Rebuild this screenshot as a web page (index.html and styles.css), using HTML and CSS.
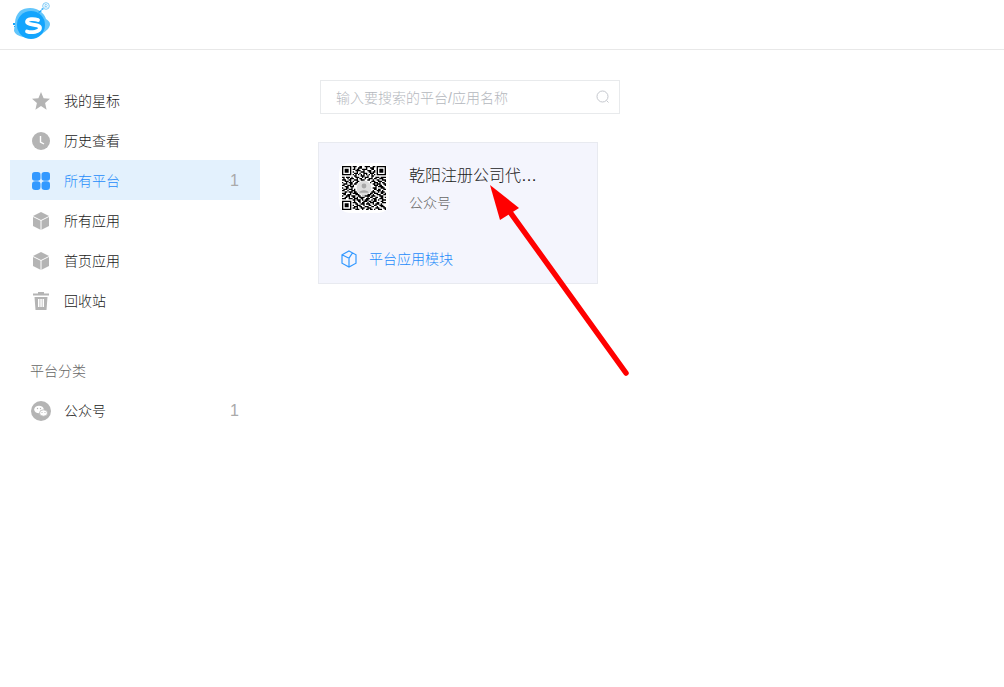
FILE: index.html
```html
<!DOCTYPE html>
<html lang="zh-CN">
<head>
<meta charset="utf-8">
<title>平台</title>
<link rel="stylesheet" href="styles.css">
</head>
<body>
<header class="topbar">
  <svg class="logo" viewBox="0 0 40 40" width="40" height="40">
    <path fill="#63c6fb" d="M8 10c4-3 11-4 16-2 5 2 9 6 10 10 2 1 4 3 4 5 0 4-4 7-8 10-5 4-13 5-19 3-5-1-8-3-9-6 0-3 1-5 1-8 0-5 2-9 5-12z"/>
    <circle cx="19" cy="24" r="14" fill="#14a5fd"/>
    <path fill="none" stroke="#fff" stroke-width="3.800" stroke-linecap="round" d="M26 19c-4-1.500-11-1.500-11 2 0 3.500 13 1.500 13 6 0 4-9 5-13 3.500"/>
    <path fill="#14a5fd" d="M1 22h2v2H1zM2 25h1v1H2zM26 11l3-2 1 1-3 2zM29 8l2-1 1 1-2 1z"/>
    <circle cx="34" cy="5" r="3.300" fill="#fff" stroke="#7fcbf7" stroke-width="1"/>
    <path fill="none" stroke="#7fcbf7" stroke-width=".8" d="M33 7V3.500h1.300a1 1 0 0 1 0 2H33M34.300 5.500l1 1.500"/>
  </svg>
</header>

<div class="layout">
  <nav class="sidebar">
    <a class="nav-item">
      <svg class="icon" viewBox="0 0 18 18"><path class="fill-gray" d="M9 0l2.600 6.200 6.400.5-4.900 4.300 1.500 6.700L9 14.100l-5.600 3.600L4.900 11 0 6.700l6.400-.5z"/></svg>
      <span class="label">我的星标</span>
    </a>
    <a class="nav-item">
      <svg class="icon" viewBox="0 0 18 18"><circle class="fill-gray" cx="9" cy="9" r="9"/><path fill="none" stroke="#fff" stroke-width="1.400" d="M8.500 4v6l3.500 2"/></svg>
      <span class="label">历史查看</span>
    </a>
    <a class="nav-item active">
      <svg class="icon" viewBox="0 0 18 18"><g fill="#3399ff"><rect width="8.500" height="8.800" rx="2.800"/><rect x="9.500" width="8.500" height="8.800" rx="2.800"/><rect y="9.200" width="8.500" height="8.800" rx="3.200"/><rect x="9.500" y="9.200" width="8.500" height="8.800" rx="3.200"/></g></svg>
      <span class="label">所有平台</span>
      <span class="count">1</span>
    </a>
    <a class="nav-item">
      <svg class="icon" viewBox="0 0 18 18"><path class="fill-gray" d="M9 0l8 4v10l-8 4-8-4V4z"/><path fill="none" stroke="#fff" d="M1 4.500l8 4 8-4M9 8.500V18"/></svg>
      <span class="label">所有应用</span>
    </a>
    <a class="nav-item">
      <svg class="icon" viewBox="0 0 18 18"><path class="fill-gray" d="M9 0l8 4v10l-8 4-8-4V4z"/><path fill="none" stroke="#fff" d="M1 4.500l8 4 8-4M9 8.500V18"/></svg>
      <span class="label">首页应用</span>
    </a>
    <a class="nav-item">
      <svg class="icon" viewBox="0 0 18 18"><path class="fill-gray" d="M6 0h6v1.500h5V3.500H1V1.500h5zM2.500 5h13l-1 13h-11zM6 7v8h1.500V7zM8.300 7v8h1.500V7zM10.500 7v8H12V7z" fill-rule="evenodd"/></svg>
      <span class="label">回收站</span>
    </a>

    <h2 class="nav-heading">平台分类</h2>

    <a class="nav-item">
      <svg class="icon icon-round" viewBox="0 0 20 20"><circle class="fill-gray" cx="10" cy="10" r="10"/><ellipse cx="8" cy="8.500" rx="4.800" ry="3.800" fill="#fff"/><ellipse cx="12.500" cy="12" rx="4" ry="3.200" fill="#fff" stroke="#b4b4b4" stroke-width=".8"/><circle cx="6.500" cy="7.500" r=".7" class="fill-gray"/><circle cx="9.500" cy="7.500" r=".7" class="fill-gray"/><circle cx="11" cy="11.500" r=".6" class="fill-gray"/><circle cx="14" cy="11.500" r=".6" class="fill-gray"/></svg>
      <span class="label">公众号</span>
      <span class="count">1</span>
    </a>
  </nav>

  <main class="content">
    <div class="search">
      <span class="search-placeholder">输入要搜索的平台/应用名称</span>
      <svg class="search-icon" viewBox="0 0 14 14"><circle cx="6.500" cy="6.500" r="5.500" fill="none" stroke="#c5c8ce" stroke-width="1"/><path d="M10.500 10.500l2 2" stroke="#c5c8ce" stroke-width="1"/></svg>
    </div>

    <section class="card">
      <div class="card-head">
        <div class="avatar">
          <svg class="qr" viewBox="0 0 33 33">
            <path fill="#000" fill-rule="evenodd" d="M0 0h7v7H0zM1 1v5h5V1zM2 2h3v3H2zM26 0h7v7h-7zM27 1v5h5V1zM28 2h3v3h-3zM0 26h7v7H0zM1 27v5h5v-5zM2 28h3v3H2z"/>
            <path fill="none" stroke="#000" stroke-width="1" d="M8 .5h3M13 .5h2M17 .5h4M23 .5h2M9 1.500h1M12 1.500h3M18 1.500h1M21 1.500h3M8 2.500h2M11 2.500h2M15 2.500h4M22 2.500h2M10 3.500h4M16 3.500h1M19 3.500h3M24 3.500h1M8 4.500h1M11 4.500h1M14 4.500h3M20 4.500h2M23 4.500h2M9 5.500h3M13 5.500h1M16 5.500h3M21 5.500h3M8 6.500h1M10 6.500h1M12 6.500h1M14 6.500h1M16 6.500h1M18 6.500h1M20 6.500h1M22 6.500h1M24 6.500h1M9 7.500h2M14 7.500h3M19 7.500h1M22 7.500h2M0 8.500h2M3 8.500h3M7 8.500h1M10 8.500h3M15 8.500h1M17 8.500h3M22 8.500h1M25 8.500h3M29 8.500h4M1 9.500h1M4 9.500h1M6 9.500h3M11 9.500h1M13 9.500h2M17 9.500h1M20 9.500h3M24 9.500h2M28 9.500h3M0 10.500h3M5 10.500h2M9 10.500h3M14 10.500h3M19 10.500h2M23 10.500h1M26 10.500h2M30 10.500h3M2 11.500h3M6 11.500h1M8 11.500h1M11 11.500h2M22 11.500h3M27 11.500h3M32 11.500h1M0 12.500h1M3 12.500h1M5 12.500h3M10 12.500h2M21 12.500h1M24 12.500h3M28 12.500h1M30 12.500h2M1 13.500h3M6 13.500h2M9 13.500h2M23 13.500h2M26 13.500h3M31 13.500h2M0 14.500h2M4 14.500h3M8 14.500h1M24 14.500h3M28 14.500h2M32 14.500h1M2 15.500h3M6 15.500h3M25 15.500h1M27 15.500h4M0 16.500h1M3 16.500h2M7 16.500h1M23 16.500h3M29 16.500h3M1 17.500h3M5 17.500h3M9 17.500h1M24 17.500h2M27 17.500h2M31 17.500h2M0 18.500h2M4 18.500h1M7 18.500h3M23 18.500h1M26 18.500h3M30 18.500h1M2 19.500h2M5 19.500h3M9 19.500h2M22 19.500h3M27 19.500h1M29 19.500h3M0 20.500h3M6 20.500h1M8 20.500h4M21 20.500h2M24 20.500h3M29 20.500h2M32 20.500h1M1 21.500h2M4 21.500h3M10 21.500h3M15 21.500h2M19 21.500h3M23 21.500h1M26 21.500h3M31 21.500h2M0 22.500h1M3 22.500h3M7 22.500h3M12 22.500h2M17 22.500h4M22 22.500h3M28 22.500h3M2 23.500h2M5 23.500h1M8 23.500h2M11 23.500h1M13 23.500h4M19 23.500h1M21 23.500h2M25 23.500h2M29 23.500h2M32 23.500h1M0 24.500h3M5 24.500h3M9 24.500h3M14 24.500h2M18 24.500h3M23 24.500h3M28 24.500h3M8 25.500h2M11 25.500h3M15 25.500h1M17 25.500h3M22 25.500h1M24 25.500h2M27 25.500h1M30 25.500h3M9 26.500h1M12 26.500h2M16 26.500h3M20 26.500h2M23 26.500h3M29 26.500h2M8 27.500h3M13 27.500h1M15 27.500h2M19 27.500h1M21 27.500h3M26 27.500h2M30 27.500h3M10 28.500h2M14 28.500h3M18 28.500h3M23 28.500h1M25 28.500h3M29 28.500h1M8 29.500h1M11 29.500h3M16 29.500h1M20 29.500h2M24 29.500h2M28 29.500h3M9 30.500h3M13 30.500h2M17 30.500h3M22 30.500h2M26 30.500h1M29 30.500h3M8 31.500h2M11 31.500h1M14 31.500h3M19 31.500h3M25 31.500h3M31 31.500h2M10 32.500h3M15 32.500h1M18 32.500h2M21 32.500h2M24 32.500h1M27 32.500h3M32 32.500h1"/>
            <circle cx="16.500" cy="16.500" r="5.500" fill="#dcdcdc"/>
            <circle cx="16.500" cy="15" r="1.800" fill="#a8a8a8"/>
            <path d="M13 20c0-2.500 7-2.500 7 0z" fill="#a8a8a8"/>
          </svg>
        </div>
        <div class="card-info">
          <div class="card-title">乾阳注册公司代…</div>
          <div class="card-sub">公众号</div>
        </div>
      </div>
      <a class="card-link">
        <svg class="link-icon" viewBox="0 0 16 18"><path fill="none" stroke="#3399ff" stroke-width="1.200" d="M8 1l7 3.800v8.400L8 17l-7-3.800V4.800zM1 4.800l7 3.400 3.500-5.300M8 8.200V17"/></svg>
        <span>平台应用模块</span>
      </a>
    </section>
  </main>
</div>

<svg class="annotation" viewBox="0 0 1004 687" width="1004" height="687">
  <path d="M626 373L510 212" fill="none" stroke="#ff0000" stroke-width="5.500" stroke-linecap="round"/>
  <path d="M490 185l29 23-19 12z" fill="#ff0000"/>
</svg>
</body>
</html>
```

FILE: styles.css
```css
* {
  box-sizing: border-box;
}

html,
body {
  margin: 0;
  padding: 0;
}

body {
  position: relative;
  height: 687px;
  overflow: hidden;
  background: #fff;
  color: #1a1a1a;
  font: 300 14px/20px "Liberation Sans", "Noto Sans CJK SC", sans-serif;
}

.topbar {
  display: flex;
  align-items: flex-start;
  height: 50px;
  padding: 1px 0 0 12px;
  border-bottom: 1px solid #e8e8e8;
}

.logo {
  display: block;
}

.layout {
  display: flex;
  padding: 30px 0 0 10px;
}

.sidebar {
  display: flex;
  flex-direction: column;
  flex: none;
  width: 250px;
}

.nav-item {
  display: flex;
  align-items: center;
  height: 40px;
  padding: 2px 21px 0 22px;
  color: #1a1a1a;
}

.nav-item.active {
  background: #e3f1fd;
  color: #1f8cfa;
}

.icon {
  flex: none;
  width: 18px;
  height: 18px;
  margin-right: 14px;
}

.icon-round {
  width: 20px;
  height: 20px;
  margin-left: -1px;
  margin-right: 13px;
}

.fill-gray {
  fill: #b4b4b4;
}

.label {
  flex: 1;
}

.count {
  color: #aaa;
  font-size: 16px;
}

.nav-heading {
  height: 40px;
  margin: 30px 0 0;
  padding: 1px 0 0 20px;
  color: #666;
  font-size: 14px;
  font-weight: 300;
  line-height: 40px;
}

.content {
  flex: 1;
  padding-left: 58px;
}

.search {
  display: flex;
  align-items: center;
  justify-content: space-between;
  width: 300px;
  height: 34px;
  margin-left: 2px;
  padding: 2px 9px 0 15px;
  border: 1px solid #e8eaec;
}

.search-placeholder {
  color: #b4b7bd;
}

.search-icon {
  width: 14px;
  height: 14px;
  margin-top: -2px;
}

.card {
  display: flex;
  flex-direction: column;
  justify-content: space-between;
  width: 280px;
  height: 142px;
  margin-top: 28px;
  padding: 20px 20px 14px 20px;
  border: 1px solid #e8eaf0;
  background: #f4f5fd;
}

.card-head {
  display: flex;
  align-items: flex-start;
}

.avatar {
  display: flex;
  flex: none;
  align-items: center;
  justify-content: center;
  width: 50px;
  height: 50px;
  border-radius: 10px;
  background: #fff;
}

.qr {
  display: block;
  width: 44px;
  height: 46px;
  filter: blur(0.6px);
}

.card-info {
  min-width: 0;
  margin-left: 20px;
  padding-top: 3px;
}

.card-title {
  color: #1a1a1a;
  font-size: 16px;
  line-height: 20px;
  white-space: nowrap;
}

.card-sub {
  margin-top: 7px;
  color: #666;
}

.card-link {
  display: flex;
  align-items: center;
  padding-left: 2px;
  color: #1f8cfa;
}

.link-icon {
  width: 16px;
  height: 18px;
  margin-right: 12px;
}

.annotation {
  position: absolute;
  top: 0;
  left: 0;
  pointer-events: none;
}
```
